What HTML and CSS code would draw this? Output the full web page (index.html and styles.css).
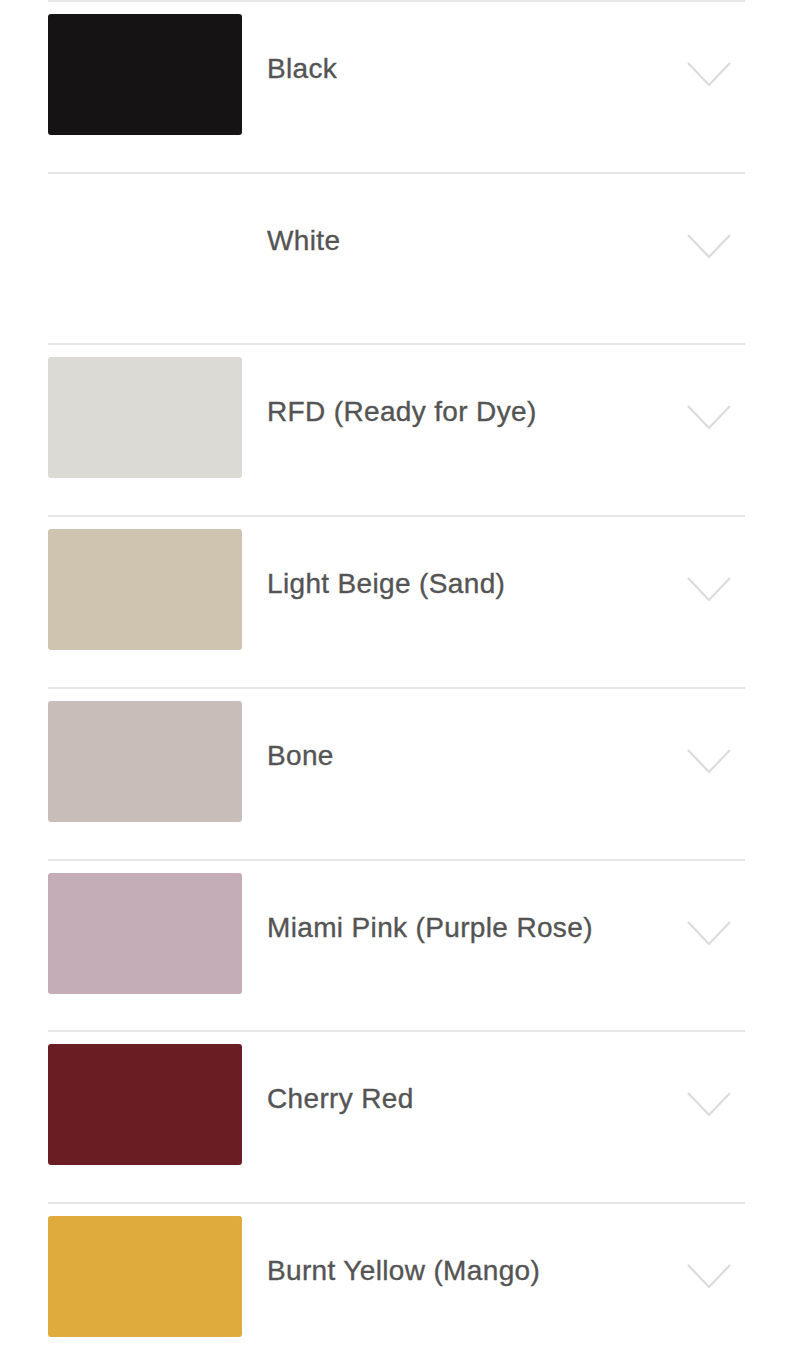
FILE: index.html
```html
<!DOCTYPE html>
<html lang="en">
<head>
<meta charset="utf-8">
<title>Colours</title>
<link rel="stylesheet" href="styles.css">
</head>
<body>
<ul class="list">
  <li class="row"><span class="swatch black"></span><span class="label">Black</span><svg class="chev" viewBox="0 0 44 25" width="44" height="25"><polyline points="1,1 22,23 43,1"/></svg></li>
  <li class="row"><span class="swatch white"></span><span class="label">White</span><svg class="chev" viewBox="0 0 44 25" width="44" height="25"><polyline points="1,1 22,23 43,1"/></svg></li>
  <li class="row"><span class="swatch rfd"></span><span class="label">RFD (Ready for Dye)</span><svg class="chev" viewBox="0 0 44 25" width="44" height="25"><polyline points="1,1 22,23 43,1"/></svg></li>
  <li class="row"><span class="swatch beige"></span><span class="label">Light Beige (Sand)</span><svg class="chev" viewBox="0 0 44 25" width="44" height="25"><polyline points="1,1 22,23 43,1"/></svg></li>
  <li class="row"><span class="swatch bone"></span><span class="label">Bone</span><svg class="chev" viewBox="0 0 44 25" width="44" height="25"><polyline points="1,1 22,23 43,1"/></svg></li>
  <li class="row"><span class="swatch pink"></span><span class="label">Miami Pink (Purple Rose)</span><svg class="chev" viewBox="0 0 44 25" width="44" height="25"><polyline points="1,1 22,23 43,1"/></svg></li>
  <li class="row"><span class="swatch cherry"></span><span class="label">Cherry Red</span><svg class="chev" viewBox="0 0 44 25" width="44" height="25"><polyline points="1,1 22,23 43,1"/></svg></li>
  <li class="row"><span class="swatch yellow"></span><span class="label">Burnt Yellow (Mango)</span><svg class="chev" viewBox="0 0 44 25" width="44" height="25"><polyline points="1,1 22,23 43,1"/></svg></li>
</ul>
</body>
</html>
```
FILE: styles.css
```css
html, body {
  margin: 0;
  padding: 0;
  background: #fff;
}
body {
  font-family: "Liberation Sans", Arial, sans-serif;
  overflow: hidden;
}
.list {
  list-style: none;
  margin: 0;
  padding: 0 49px 0 48px;
}
.row {
  box-sizing: border-box;
  height: 171.71px;
  border-top: 2px solid #e6e6e6;
  padding-top: 12px;
  display: flex;
  align-items: flex-start;
}
.swatch {
  flex: none;
  width: 194px;
  height: 121px;
  border-radius: 3px;
}
.black { background: #161314; }
.white { background: #fff; }
.rfd { background: #dcdad5; }
.beige { background: #cfc4af; }
.bone { background: #c8bdb9; }
.pink { background: #c5adb8; }
.cherry { background: #6b1d24; }
.yellow { background: #dfab3d; }
.label {
  flex: 1;
  margin-left: 25px;
  margin-top: 39px;
  font-size: 28px;
  line-height: 32px;
  letter-spacing: 0.35px;
  color: #545454;
  -webkit-text-stroke: 0.35px #545454;
}
.chev {
  flex: none;
  margin-top: 48px;
  margin-right: 14px;
  fill: none;
  stroke: #dcdcdc;
  stroke-width: 2.2;
}
```
